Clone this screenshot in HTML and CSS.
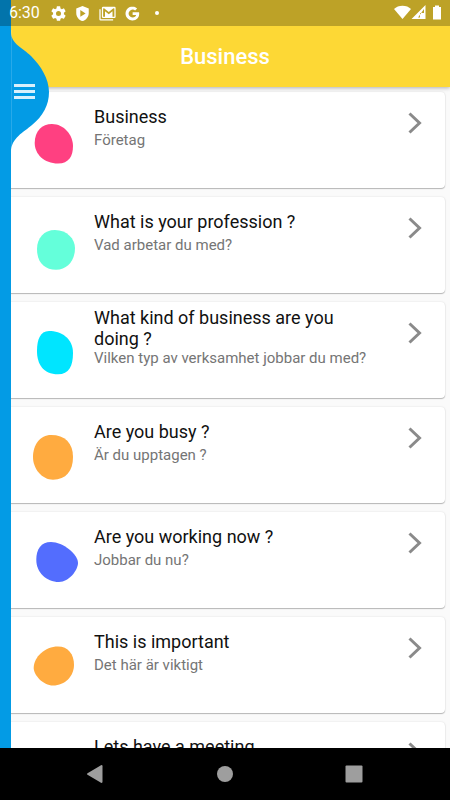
FILE: index.html
```html
<!DOCTYPE html>
<html lang="en">
<head>
<meta charset="utf-8">
<meta name="viewport" content="width=device-width, initial-scale=1">
<title>Business</title>
<link rel="stylesheet" href="styles.css">
</head>
<body>
<div class="status">
  <span class="clock">6:30</span>
  <svg class="status-icon" viewBox="0 0 24 24"><path d="M20.600 13.200c.1-.4.1-.8.1-1.200s0-.8-.1-1.200l2.500-1.900c.2-.2.3-.5.1-.8l-2.300-4c-.2-.3-.5-.4-.8-.3l-2.900 1.200c-.6-.5-1.300-.9-2-1.200L14.700.8c0-.3-.3-.5-.6-.5H9.900c-.3 0-.6.2-.6.5l-.5 3c-.7.3-1.400.7-2 1.200L3.900 3.800c-.3-.1-.6 0-.8.300l-2.300 4c-.2.3-.1.6.1.8l2.500 1.900c-.1.4-.1.8-.1 1.200s0 .8.1 1.200L.9 15.100c-.2.200-.3.500-.1.8l2.300 4c.2.300.5.4.8.3L6.800 19c.6.500 1.300.9 2 1.200l.5 3c0 .3.3.5.6.5h4.200c.3 0 .6-.2.6-.5l.5-3c.7-.3 1.400-.7 2-1.200l2.900 1.200c.3.1.6 0 .8-.3l2.300-4c.2-.3.1-.6-.1-.8zM12 16a4 4 0 1 1 0-8 4 4 0 0 1 0 8z"/></svg>
  <svg class="status-icon" viewBox="0 0 24 24"><path fill-rule="evenodd" d="M12 0 22 4v7c0 6-4.200 11.500-10 13C6.200 22.500 2 17 2 11V4zM8.500 6.500v10.500l8.500-5.200z"/></svg>
  <svg class="status-icon wide" viewBox="0 0 26 24"><path fill-rule="evenodd" d="M6 1h18a2 2 0 0 1 2 2v14a2 2 0 0 1-2 2H6a2 2 0 0 1-2-2V3a2 2 0 0 1 2-2zM6 4v13h3V8.500l6 4.500 6-4.500V17h3V4l-1.500-.5L15 9.500 7.500 3.500zM0 5h2v16h20v2H2a2 2 0 0 1-2-2z"/></svg>
  <svg class="status-icon" viewBox="0 0 24 24"><path d="M12.200 10v4.300h5.600c-.5 2.400-2.500 4-5.600 4a6.300 6.300 0 1 1 4-11.100l3.200-3.200A11 11 0 1 0 12.200 23c6.300 0 10.500-4.400 10.500-10.700 0-.8-.1-1.600-.2-2.300z"/></svg>
  <svg class="status-dot" viewBox="0 0 4 4"><circle cx="2" cy="2" r="2"/></svg>
  <svg class="signals" viewBox="0 0 48 16"><path d="M0 4C4-.5 13-.5 17 4L8.500 14z"/><path fill-rule="evenodd" d="M31.500 0v14H17.500zM30 4l-6 8.500h2V8h4z"/><path d="M39 2h2V.5h4V2h2v12.500h-8z"/></svg>
</div>
<header class="app-bar"><h1>Business</h1></header>
<main class="list-area">
<ul class="list">
  <li class="card">
    <svg class="blob pink" viewBox="24 0 60 96"><path d="M34.700 51C34.700 39 42 32 52 32C64 32 73 43 73 54C73 64 69 71.500 58 71.500C44 71.500 34.700 62 34.700 51Z"/></svg>
    <div class="text"><h2>Business</h2><p>Företag</p></div>
    <svg class="chevron" viewBox="0 0 14 22"><path d="M1.500 1.500l10 9.500-10 9.500"/></svg>
  </li>
  <li class="card">
    <svg class="blob mint" viewBox="24 0 60 96"><path d="M37 52C37 41 44 33 55 33C67 33 75 42 75 51C75 63 68 72.700 56 72.700C44 72.700 37 65 37 52Z"/></svg>
    <div class="text"><h2>What is your profession ?</h2><p>Vad arbetar du med?</p></div>
    <svg class="chevron" viewBox="0 0 14 22"><path d="M1.500 1.500l10 9.500-10 9.500"/></svg>
  </li>
  <li class="card two-line">
    <svg class="blob cyan" viewBox="24 0 60 96"><path d="M37 49C37 38 40 29 49 29C61 29 73 36 73 51C73 64 69 72.300 58 72.300C43 72.300 37 62 37 49Z"/></svg>
    <div class="text"><h2>What kind of business are you doing ?</h2><p>Vilken typ av verksamhet jobbar du med?</p></div>
    <svg class="chevron" viewBox="0 0 14 22"><path d="M1.500 1.500l10 9.500-10 9.500"/></svg>
  </li>
  <li class="card">
    <svg class="blob orange" viewBox="24 0 60 96"><path d="M33 50C33 38 40 28 51 28C65 28 73 36 73 50C73 64 66 72.700 53 72.700C42 72.700 33 62 33 50Z"/></svg>
    <div class="text"><h2>Are you busy ?</h2><p>Är du upptagen ?</p></div>
    <svg class="chevron" viewBox="0 0 14 22"><path d="M1.500 1.500l10 9.500-10 9.500"/></svg>
  </li>
  <li class="card">
    <svg class="blob indigo" viewBox="24 0 60 96"><path d="M36.300 48C36.300 37 41 30 51 30C63 30 78 42 78 51C78 58 69 70 59 70C46 70 36.300 60 36.300 48Z"/></svg>
    <div class="text"><h2>Are you working now ?</h2><p>Jobbar du nu?</p></div>
    <svg class="chevron" viewBox="0 0 14 22"><path d="M1.500 1.500l10 9.500-10 9.500"/></svg>
  </li>
  <li class="card">
    <svg class="blob orange" viewBox="24 0 60 96"><path d="M33.700 51C33.700 40 45 29.500 58 29.500C68 29.500 74 37 74 48C74 59 65 68.500 53 68.500C43 68.500 33.700 58 33.700 51Z"/></svg>
    <div class="text"><h2>This is important</h2><p>Det här är viktigt</p></div>
    <svg class="chevron" viewBox="0 0 14 22"><path d="M1.500 1.500l10 9.500-10 9.500"/></svg>
  </li>
  <li class="card">
    <svg class="blob pink" viewBox="24 0 60 96"><circle cx="55" cy="52" r="19"/></svg>
    <div class="text"><h2>Lets have a meeting</h2></div>
    <svg class="chevron" viewBox="0 0 14 22"><path d="M1.500 1.500l10 9.500-10 9.500"/></svg>
  </li>
</ul>
</main>
<aside class="drawer">
  <button class="menu" aria-label="Open menu">
    <svg viewBox="0 0 40 124"><path class="bulge" d="M0 2C0 14 12 18 20 26C30 36 38 49 38 62C38 75 32 86 21 95C13 102 0 108 0 122Z"/><path class="edge" d="M.5 0v122"/><path class="bars" d="M3 55.500h21M3 61.500h21M3 67.500h21"/></svg>
  </button>
</aside>
<nav class="nav-bar">
  <button aria-label="Back"><svg viewBox="0 0 20 20"><path d="M2.500 9.200 16 1.200q1.500-.6 1.500 1v15.600q0 1.600-1.500 1L2.500 10.800q-1.200-.8 0-1.600z"/></svg></button>
  <button aria-label="Home"><svg viewBox="0 0 20 20"><circle cx="10" cy="10" r="8"/></svg></button>
  <button aria-label="Recent apps"><svg viewBox="0 0 20 20"><rect x="1.500" y="1.500" width="17" height="17" rx="1"/></svg></button>
</nav>
</body>
</html>
```
FILE: styles.css
```css
* {
  box-sizing: border-box;
}

body {
  margin: 0;
  height: 100vh;
  display: flex;
  flex-direction: column;
  position: relative;
  overflow: hidden;
  background: #fafafa;
  font-family: Roboto, "Liberation Sans", sans-serif;
}

h1, h2, p, ul {
  margin: 0;
  padding: 0;
}

button {
  border: 0;
  padding: 0;
  background: none;
  cursor: pointer;
}

svg {
  display: block;
}

.status {
  position: absolute;
  top: 0;
  left: 0;
  right: 0;
  z-index: 3;
  height: 26px;
  padding: 0 8px 0 9px;
  display: flex;
  align-items: center;
  gap: 9px;
  background: rgba(0, 0, 0, 0.25);
  color: #fff;
}

.status svg {
  fill: #fff;
}

.clock {
  margin-right: 2px;
  font-size: 16px;
  line-height: 26px;
}

.status-icon {
  width: 15px;
  height: 15px;
}

.status-icon.wide {
  width: 17px;
}

.status-dot {
  width: 4px;
  height: 4px;
  margin-left: 6px;
}

.signals {
  width: 48px;
  height: 16px;
  margin-left: auto;
}

.app-bar {
  flex: none;
  height: 87px;
  padding-top: 26px;
  z-index: 1;
  background: #fdd835;
  box-shadow: 0 1px 4px rgba(0, 0, 0, 0.3);
}

.app-bar h1 {
  font-size: 22px;
  font-weight: 500;
  line-height: 62px;
  text-align: center;
  color: #fff;
}

.list-area {
  flex: 1;
  min-height: 0;
  overflow: hidden;
}

.list {
  display: grid;
  gap: 9px;
  padding: 5px 5px 5px 4px;
  list-style: none;
}

.card {
  display: flex;
  height: 96px;
  padding: 0 23px 0 20px;
  border-radius: 4px;
  background: #fff;
  box-shadow: 0 1px 1px rgba(0, 0, 0, 0.25), 0 0 2px rgba(0, 0, 0, 0.12);
}

.blob {
  flex: none;
  width: 60px;
  height: 96px;
}

.pink { fill: #ff4081; }
.mint { fill: #64ffda; }
.cyan { fill: #00e5ff; }
.orange { fill: #ffab40; }
.indigo { fill: #536dfe; }

.text {
  flex: 1;
  padding: 14px 24px 0 10px;
}

.text h2 {
  font-size: 18px;
  font-weight: 400;
  line-height: 21px;
  color: #111;
}

.text p {
  margin-top: 4px;
  font-size: 15px;
  line-height: 18px;
  color: #757575;
}

.two-line .text {
  padding-top: 5px;
}

.two-line .text h2 {
  padding-right: 24px;
}

.two-line .text p {
  margin-top: 0;
}

.chevron {
  flex: none;
  width: 14px;
  height: 22px;
  margin-top: 20px;
  fill: none;
  stroke: #8a8a8a;
  stroke-width: 3;
}

.drawer {
  position: absolute;
  top: 0;
  bottom: 52px;
  left: 0;
  z-index: 2;
  width: 11px;
  background: #039be5;
}

.menu {
  margin-top: 30px;
}

.menu svg {
  width: 40px;
  height: 124px;
  margin-left: 11px;
}

.bulge {
  fill: #039be5;
}

.edge {
  stroke: #fff;
  stroke-opacity: 0.15;
}

.bars {
  stroke: #d9f0fc;
  stroke-width: 3;
}

.nav-bar {
  flex: none;
  height: 52px;
  padding: 0 31px 0 30px;
  display: flex;
  align-items: center;
  background: #000;
}

.nav-bar button {
  flex: 1;
  display: flex;
  justify-content: center;
}

.nav-bar svg {
  width: 20px;
  height: 20px;
  fill: #9e9e9e;
}
```
